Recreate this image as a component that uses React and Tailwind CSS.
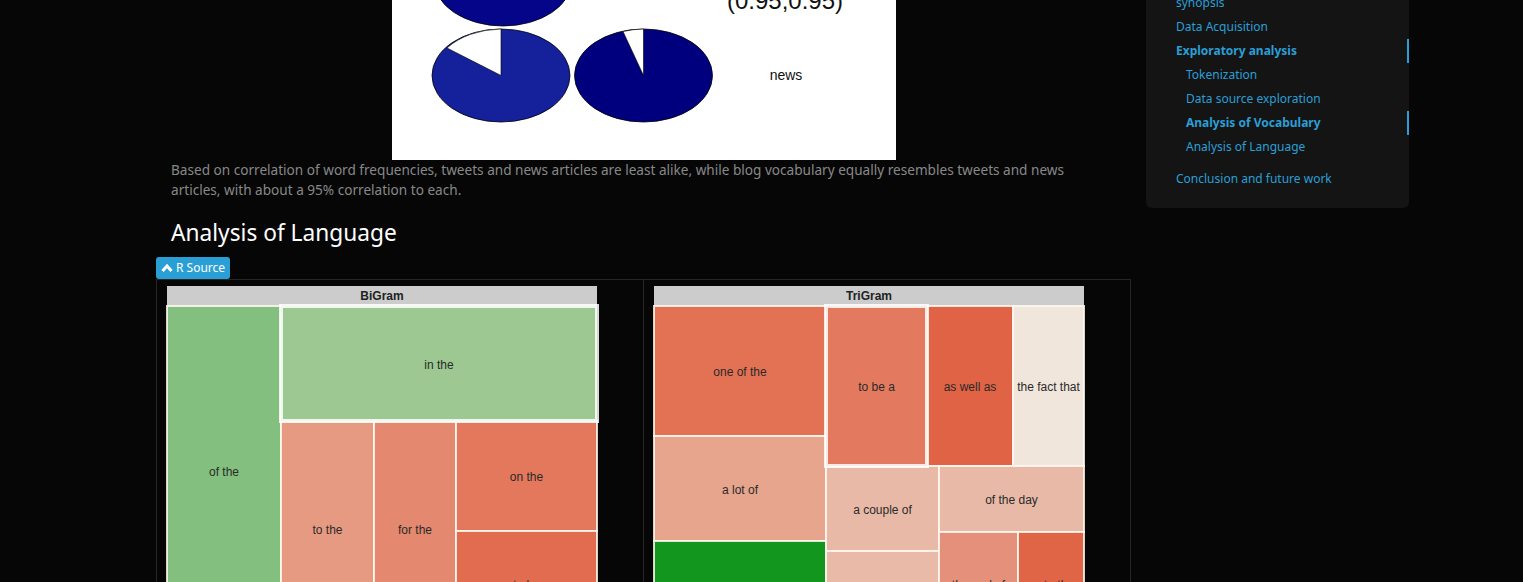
import React from 'react';

const bigram = [
    { x: 0, y: 20, w: 114, h: 330, fill: '#83bf7e', label: 'of the' },
    { x: 114, y: 135, w: 93, h: 215, fill: '#e79a82', label: 'to the' },
    { x: 207, y: 135, w: 82, h: 215, fill: '#e4886f', label: 'for the' },
    { x: 289, y: 135, w: 141, h: 110, fill: '#e3785c', label: 'on the' },
    { x: 289, y: 245, w: 141, h: 105, fill: '#e16c4f', label: 'to be' },
    { x: 114, y: 20, w: 316, h: 115, fill: '#9dc892', label: 'in the', active: true },
];

const trigram = [
    { x: 0, y: 20, w: 172, h: 130, fill: '#e37254', label: 'one of the' },
    { x: 0, y: 150, w: 172, h: 105, fill: '#e7a58e', label: 'a lot of' },
    { x: 0, y: 255, w: 172, h: 95, fill: '#12961e', label: 'at the end of' },
    { x: 273, y: 20, w: 86, h: 160, fill: '#e06345', label: 'as well as' },
    { x: 359, y: 20, w: 71, h: 160, fill: '#f0e6dc', label: 'the fact that' },
    { x: 172, y: 180, w: 113, h: 85, fill: '#e9b9a8', label: 'a couple of' },
    { x: 172, y: 265, w: 113, h: 85, fill: '#e9baa8', label: 'some of the' },
    { x: 285, y: 180, w: 145, h: 66, fill: '#e8b9a7', label: 'of the day' },
    { x: 285, y: 246, w: 79, h: 104, fill: '#e5907a', label: 'the end of' },
    { x: 364, y: 246, w: 66, h: 104, fill: '#e06446', label: 'as to the' },
    { x: 172, y: 20, w: 101, h: 160, fill: '#e37a5f', label: 'to be a', active: true },
];

const Treemap = ({ title, cells }) => (
    <svg width="434" height="350" className="block overflow-visible" style={{ fontFamily: '"Liberation Sans", Arial, sans-serif' }}>
        <rect x="0" y="0" width="430" height="20" fill="#cccccc" />
        <text x="215" y="14" textAnchor="middle" fontSize="12" fontWeight="bold" fill="#222">{title}</text>
        {cells.map(c => (
            <g key={c.label}>
                <rect x={c.x} y={c.y} width={c.w} height={c.h} fill={c.fill}
                    stroke={c.active ? 'rgba(255,255,255,0.85)' : 'rgba(255,248,240,0.85)'}
                    strokeWidth={c.active ? 4 : 2} />
                <text x={c.x + c.w / 2} y={c.y + c.h / 2 + 5} textAnchor="middle" fontSize="12" fill="#2a2a2a">{c.label}</text>
            </g>
        ))}
    </svg>
);

const PieImage = () => (
    <svg width="504" height="160" className="block" style={{ fontFamily: '"Liberation Sans", Arial, sans-serif' }}>
        <rect x="0" y="0" width="504" height="160" fill="#ffffff" />
        <ellipse cx="111" cy="-20" rx="69" ry="46" fill="#05058a" stroke="#000" strokeWidth="0.8" />
        <text x="393" y="9" textAnchor="middle" fontSize="24" fill="#111">(0.95,0.95)</text>
        {/* blogs vs tweets */}
        <ellipse cx="109" cy="75.5" rx="69" ry="46.5" fill="#15219b" stroke="#000" strokeWidth="0.8" />
        <path d="M109 75.5 L109 29 A69 46.5 0 0 0 55 48 Z" fill="#ffffff" stroke="#000" strokeWidth="0.6" />
        {/* blogs vs news */}
        <ellipse cx="251.5" cy="75.5" rx="69" ry="46.5" fill="#00007f" stroke="#000" strokeWidth="0.8" />
        <path d="M251.5 75.5 L251.5 29 A69 46.5 0 0 0 231 31.5 Z" fill="#ffffff" stroke="#000" strokeWidth="0.6" />
        <text x="394" y="80" textAnchor="middle" fontSize="14" fill="#111">news</text>
    </svg>
);

const NavItem = ({ children, sub, active }) => (
    <li>
        <a className={`block h-6 leading-6 text-[12px] text-[#2a9fd6] ${sub ? 'pl-10' : 'pl-[30px]'} ${active ? 'font-bold border-r-2 border-[#2a9fd6]' : 'border-r-2 border-transparent'}`}>
            {children}
        </a>
    </li>
);

const App = () => {
    return (
        <div className="h-[582px] overflow-hidden bg-[#060606]" style={{ fontFamily: '"Noto Sans", "Open Sans", sans-serif' }}>
            <div className="flex items-start gap-[15px] pl-[156px]">
                <main className="w-[975px] shrink-0">
                    <div className="flex justify-center">
                        <PieImage />
                    </div>
                    <p className="px-[15px] text-[13.6px] leading-5 text-[#888888]">
                        Based on correlation of word frequencies, tweets and news articles are least alike, while blog vocabulary equally resembles tweets and news articles, with about a 95% correlation to each.
                    </p>
                    <h3 className="px-[15px] mt-5 text-[22.7px] leading-[26px] text-white">Analysis of Language</h3>
                    <button className="mt-[11px] flex items-center gap-[3px] h-[22px] px-[5px] rounded-[3px] bg-[#2a9fd6] text-white text-[12px]">
                        <svg width="12" height="10" viewBox="0 0 12 10">
                            <polyline points="1.5,8 6,3 10.5,8" fill="none" stroke="#fff" strokeWidth="3" />
                        </svg>
                        R Source
                    </button>
                    <div className="border border-[#262626] grid grid-cols-2">
                        <div className="pl-[10px] pt-[6px] border-r border-[#262626]">
                            <Treemap title="BiGram" cells={bigram} />
                        </div>
                        <div className="pl-[10px] pt-[6px]">
                            <Treemap title="TriGram" cells={trigram} />
                        </div>
                    </div>
                </main>
                <aside className="w-[263px] shrink-0 -mt-[9px] bg-[#141414] rounded-b-md pb-[17px]">
                    <ul>
                        <NavItem>synopsis</NavItem>
                        <NavItem>Data Acquisition</NavItem>
                        <NavItem active>Exploratory analysis</NavItem>
                        <li>
                            <ul className="mb-2">
                                <NavItem sub>Tokenization</NavItem>
                                <NavItem sub>Data source exploration</NavItem>
                                <NavItem sub active>Analysis of Vocabulary</NavItem>
                                <NavItem sub>Analysis of Language</NavItem>
                            </ul>
                        </li>
                        <NavItem>Conclusion and future work</NavItem>
                    </ul>
                </aside>
            </div>
        </div>
    );
};

export default App;
